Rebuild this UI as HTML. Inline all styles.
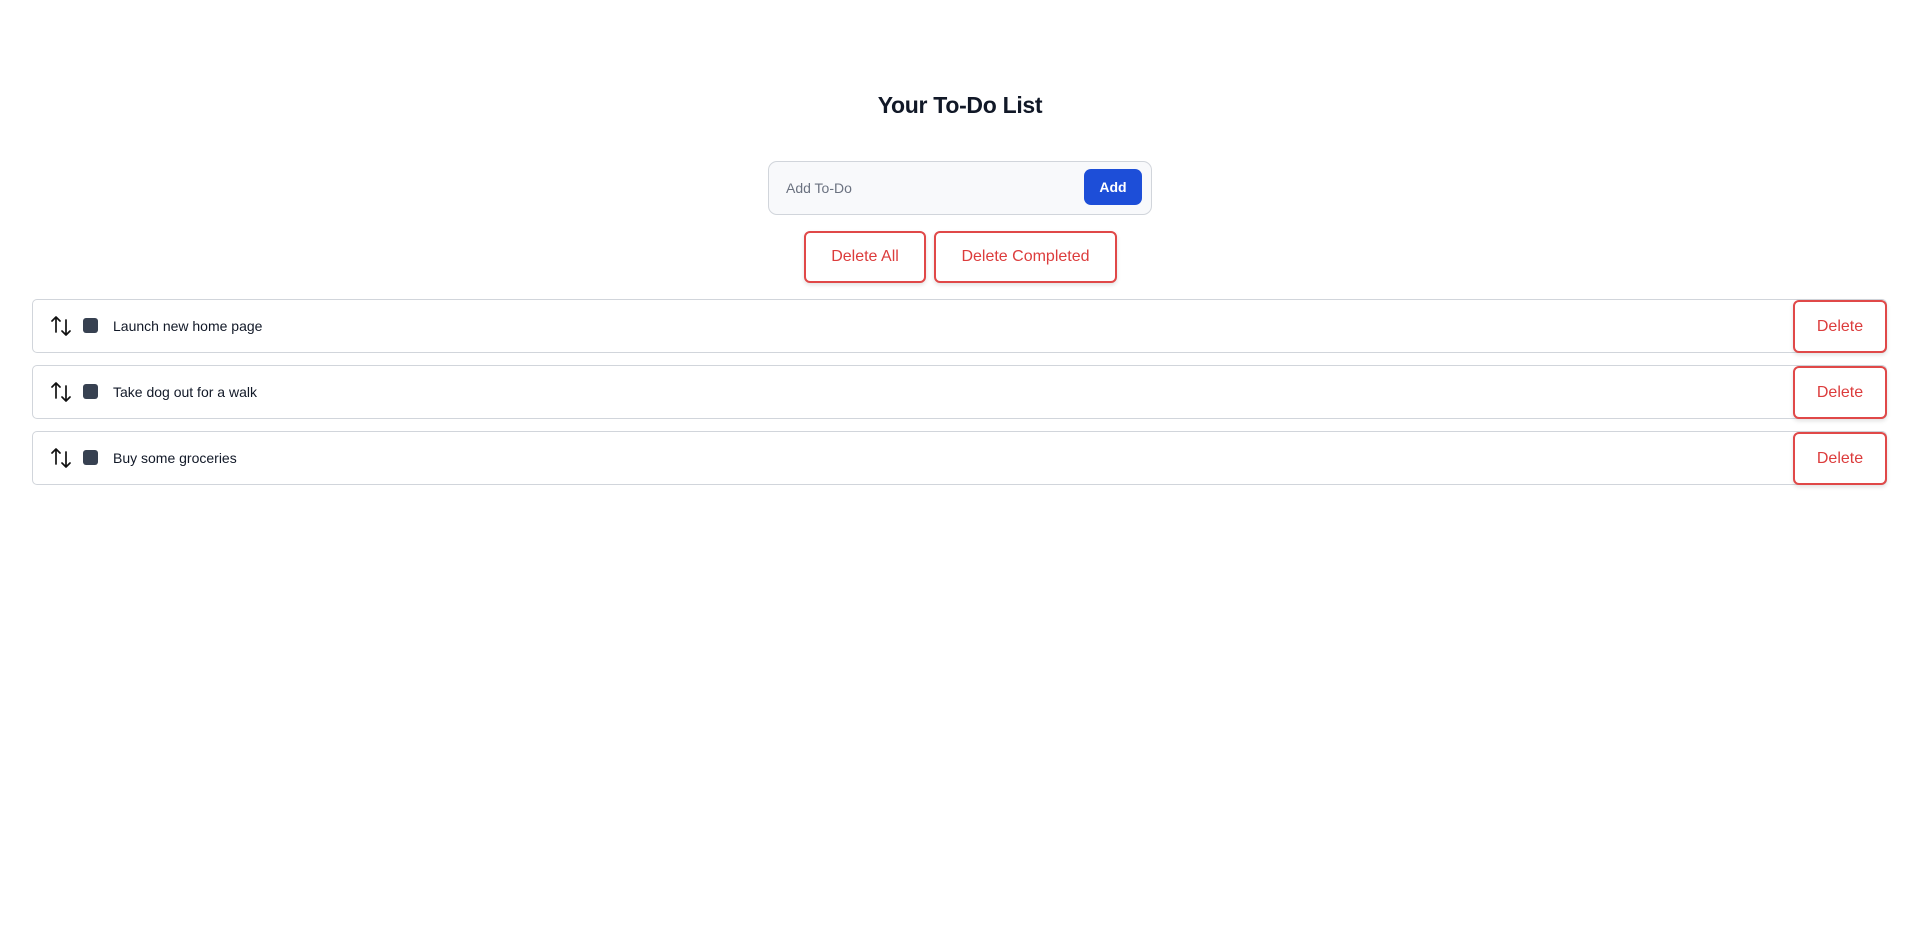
<!DOCTYPE html>
<html><head><meta charset="utf-8"><style>
*{box-sizing:border-box;margin:0;padding:0}
body{width:1920px;height:927px;background:#fff;font-family:"Liberation Sans",sans-serif;position:relative;overflow:hidden}
h1{position:absolute;left:0;width:1920px;top:92px;text-align:center;font-size:23px;font-weight:bold;color:#111827;letter-spacing:-0.3px}
.input{position:absolute;left:768px;top:161px;width:384px;height:54px;background:#f8f9fb;border:1px solid #d1d5db;border-radius:9px}
.input span{position:absolute;left:17px;top:18px;font-size:14px;color:#6b7280}
.add{position:absolute;left:1084px;top:169px;width:58px;height:36px;background:#1d4ed8;border-radius:7px;color:#fff;font-weight:bold;font-size:14px;text-align:center;line-height:36px}
.rb{position:absolute;border:2px solid #e04848;border-radius:6px;color:#dc3c3c;font-size:16px;text-align:center;background:#fff;box-shadow:0 2px 4px rgba(0,0,0,.12)}
.row{position:absolute;left:32px;width:1855px;height:54px;border:1px solid #d1d5db;border-radius:5px;background:#fff}
.row .t{position:absolute;left:80px;top:18px;font-size:14px;color:#111827}
.row svg{position:absolute;left:18px;top:16px}
.row .cb{position:absolute;left:50px;top:18px;width:15px;height:15px;background:#374151;border-radius:3px}
.del{left:1793px;width:94px;height:53px;line-height:49px}
</style></head><body>
<h1>Your To-Do List</h1>
<div class="input"><span>Add To-Do</span></div>
<div class="add">Add</div>
<div class="rb" style="left:804px;top:231px;width:122px;height:52px;line-height:48px">Delete All</div>
<div class="rb" style="left:934px;top:231px;width:183px;height:52px;line-height:48px">Delete Completed</div>

<div class="row" style="top:299px"><svg width="22" height="22" viewBox="0 0 22 22" fill="none" stroke="#111" stroke-width="1.7" stroke-linecap="round" stroke-linejoin="round"><path d="M5 1v15M1 5l4-4 4 4M15 4v15M11 15l4 4 4-4"/></svg><div class="cb"></div><div class="t">Launch new home page</div></div>
<div class="row" style="top:365px"><svg width="22" height="22" viewBox="0 0 22 22" fill="none" stroke="#111" stroke-width="1.7" stroke-linecap="round" stroke-linejoin="round"><path d="M5 1v15M1 5l4-4 4 4M15 4v15M11 15l4 4 4-4"/></svg><div class="cb"></div><div class="t">Take dog out for a walk</div></div>
<div class="row" style="top:431px"><svg width="22" height="22" viewBox="0 0 22 22" fill="none" stroke="#111" stroke-width="1.7" stroke-linecap="round" stroke-linejoin="round"><path d="M5 1v15M1 5l4-4 4 4M15 4v15M11 15l4 4 4-4"/></svg><div class="cb"></div><div class="t">Buy some groceries</div></div>

<div class="rb del" style="top:300px">Delete</div>
<div class="rb del" style="top:366px">Delete</div>
<div class="rb del" style="top:432px">Delete</div>
</body></html>
